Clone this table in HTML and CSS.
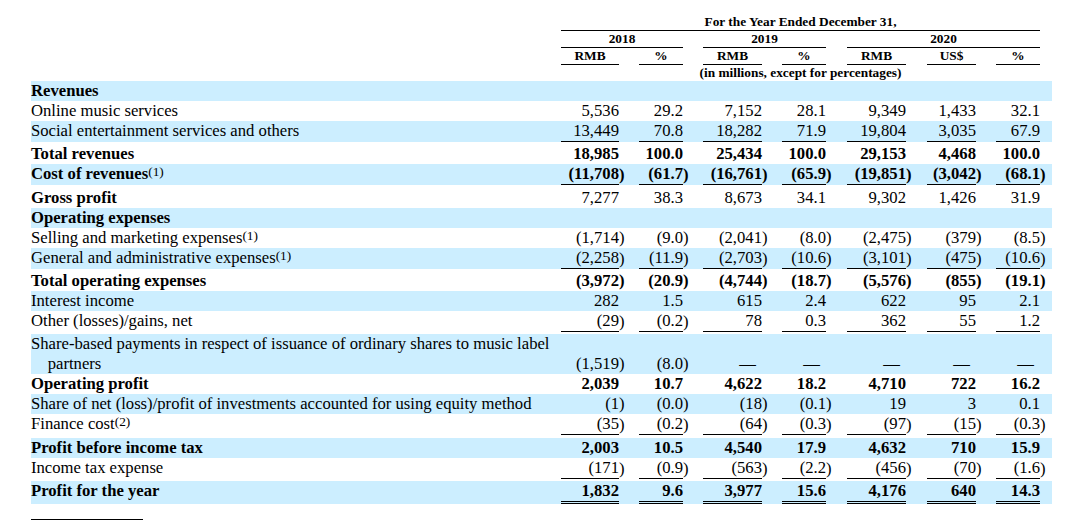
FILE: index.html
```html
<!DOCTYPE html>
<html lang="en">
<head>
<meta charset="utf-8">
<title>Consolidated Results of Operations</title>
<link rel="stylesheet" href="styles.css">
</head>
<body>
<div class="fin">
  <div class="row head">
    <div class="span-all ruled">For the Year Ended December 31,</div>
  </div>
  <div class="row head">
    <div class="y2018 ruled">2018</div>
    <div class="y2019 ruled">2019</div>
    <div class="y2020 ruled">2020</div>
  </div>
  <div class="row head">
    <div class="c1 ruled">RMB</div>
    <div class="c2 ruled">%</div>
    <div class="c3 ruled">RMB</div>
    <div class="c4 ruled">%</div>
    <div class="c5 ruled">RMB</div>
    <div class="c6 ruled">US$</div>
    <div class="c7 ruled">%</div>
  </div>
  <div class="row head">
    <div class="span-all">(in millions, except for percentages)</div>
  </div>

  <div class="row blue">
    <div class="lbl b">Revenues</div>
  </div>
  <div class="row">
    <div class="lbl">Online music services</div>
    <div class="n">5,536</div><div class="s"></div>
    <div class="n">29.2</div><div class="s"></div>
    <div class="n">7,152</div><div class="s"></div>
    <div class="n">28.1</div><div class="s"></div>
    <div class="n">9,349</div><div class="s"></div>
    <div class="n">1,433</div><div class="s"></div>
    <div class="n">32.1</div><div class="s"></div>
  </div>
  <div class="row blue u">
    <div class="lbl">Social entertainment services and others</div>
    <div class="n">13,449</div><div class="s"></div>
    <div class="n">70.8</div><div class="s"></div>
    <div class="n">18,282</div><div class="s"></div>
    <div class="n">71.9</div><div class="s"></div>
    <div class="n">19,804</div><div class="s"></div>
    <div class="n">3,035</div><div class="s"></div>
    <div class="n">67.9</div><div class="s"></div>
  </div>
  <div class="row b">
    <div class="lbl">Total revenues</div>
    <div class="n">18,985</div><div class="s"></div>
    <div class="n">100.0</div><div class="s"></div>
    <div class="n">25,434</div><div class="s"></div>
    <div class="n">100.0</div><div class="s"></div>
    <div class="n">29,153</div><div class="s"></div>
    <div class="n">4,468</div><div class="s"></div>
    <div class="n">100.0</div><div class="s"></div>
  </div>
  <div class="row blue u b">
    <div class="lbl">Cost of revenues<span class="fn">(1)</span></div>
    <div class="n">(11,708</div><div class="s">)</div>
    <div class="n">(61.7</div><div class="s">)</div>
    <div class="n">(16,761</div><div class="s">)</div>
    <div class="n">(65.9</div><div class="s">)</div>
    <div class="n">(19,851</div><div class="s">)</div>
    <div class="n">(3,042</div><div class="s">)</div>
    <div class="n">(68.1</div><div class="s">)</div>
  </div>
  <div class="row">
    <div class="lbl b">Gross profit</div>
    <div class="n">7,277</div><div class="s"></div>
    <div class="n">38.3</div><div class="s"></div>
    <div class="n">8,673</div><div class="s"></div>
    <div class="n">34.1</div><div class="s"></div>
    <div class="n">9,302</div><div class="s"></div>
    <div class="n">1,426</div><div class="s"></div>
    <div class="n">31.9</div><div class="s"></div>
  </div>
  <div class="row blue">
    <div class="lbl b">Operating expenses</div>
  </div>
  <div class="row">
    <div class="lbl">Selling and marketing expenses<span class="fn">(1)</span></div>
    <div class="n">(1,714</div><div class="s">)</div>
    <div class="n">(9.0</div><div class="s">)</div>
    <div class="n">(2,041</div><div class="s">)</div>
    <div class="n">(8.0</div><div class="s">)</div>
    <div class="n">(2,475</div><div class="s">)</div>
    <div class="n">(379</div><div class="s">)</div>
    <div class="n">(8.5</div><div class="s">)</div>
  </div>
  <div class="row blue u">
    <div class="lbl">General and administrative expenses<span class="fn">(1)</span></div>
    <div class="n">(2,258</div><div class="s">)</div>
    <div class="n">(11.9</div><div class="s">)</div>
    <div class="n">(2,703</div><div class="s">)</div>
    <div class="n">(10.6</div><div class="s">)</div>
    <div class="n">(3,101</div><div class="s">)</div>
    <div class="n">(475</div><div class="s">)</div>
    <div class="n">(10.6</div><div class="s">)</div>
  </div>
  <div class="row b">
    <div class="lbl">Total operating expenses</div>
    <div class="n">(3,972</div><div class="s">)</div>
    <div class="n">(20.9</div><div class="s">)</div>
    <div class="n">(4,744</div><div class="s">)</div>
    <div class="n">(18.7</div><div class="s">)</div>
    <div class="n">(5,576</div><div class="s">)</div>
    <div class="n">(855</div><div class="s">)</div>
    <div class="n">(19.1</div><div class="s">)</div>
  </div>
  <div class="row blue">
    <div class="lbl">Interest income</div>
    <div class="n">282</div><div class="s"></div>
    <div class="n">1.5</div><div class="s"></div>
    <div class="n">615</div><div class="s"></div>
    <div class="n">2.4</div><div class="s"></div>
    <div class="n">622</div><div class="s"></div>
    <div class="n">95</div><div class="s"></div>
    <div class="n">2.1</div><div class="s"></div>
  </div>
  <div class="row u">
    <div class="lbl">Other (losses)/gains, net</div>
    <div class="n">(29</div><div class="s">)</div>
    <div class="n">(0.2</div><div class="s">)</div>
    <div class="n">78</div><div class="s"></div>
    <div class="n">0.3</div><div class="s"></div>
    <div class="n">362</div><div class="s"></div>
    <div class="n">55</div><div class="s"></div>
    <div class="n">1.2</div><div class="s"></div>
  </div>
  <div class="row blue">
    <div class="lbl">Share-based payments in respect of issuance of ordinary shares to music label partners</div>
    <div class="n">(1,519</div><div class="s">)</div>
    <div class="n">(8.0</div><div class="s">)</div>
    <div class="n d">—</div><div class="s"></div>
    <div class="n d">—</div><div class="s"></div>
    <div class="n d">—</div><div class="s"></div>
    <div class="n d">—</div><div class="s"></div>
    <div class="n d">—</div><div class="s"></div>
  </div>
  <div class="row b">
    <div class="lbl">Operating profit</div>
    <div class="n">2,039</div><div class="s"></div>
    <div class="n">10.7</div><div class="s"></div>
    <div class="n">4,622</div><div class="s"></div>
    <div class="n">18.2</div><div class="s"></div>
    <div class="n">4,710</div><div class="s"></div>
    <div class="n">722</div><div class="s"></div>
    <div class="n">16.2</div><div class="s"></div>
  </div>
  <div class="row blue">
    <div class="lbl">Share of net (loss)/profit of investments accounted for using equity method</div>
    <div class="n">(1</div><div class="s">)</div>
    <div class="n">(0.0</div><div class="s">)</div>
    <div class="n">(18</div><div class="s">)</div>
    <div class="n">(0.1</div><div class="s">)</div>
    <div class="n">19</div><div class="s"></div>
    <div class="n">3</div><div class="s"></div>
    <div class="n">0.1</div><div class="s"></div>
  </div>
  <div class="row u">
    <div class="lbl">Finance cost<span class="fn">(2)</span></div>
    <div class="n">(35</div><div class="s">)</div>
    <div class="n">(0.2</div><div class="s">)</div>
    <div class="n">(64</div><div class="s">)</div>
    <div class="n">(0.3</div><div class="s">)</div>
    <div class="n">(97</div><div class="s">)</div>
    <div class="n">(15</div><div class="s">)</div>
    <div class="n">(0.3</div><div class="s">)</div>
  </div>
  <div class="row blue b">
    <div class="lbl">Profit before income tax</div>
    <div class="n">2,003</div><div class="s"></div>
    <div class="n">10.5</div><div class="s"></div>
    <div class="n">4,540</div><div class="s"></div>
    <div class="n">17.9</div><div class="s"></div>
    <div class="n">4,632</div><div class="s"></div>
    <div class="n">710</div><div class="s"></div>
    <div class="n">15.9</div><div class="s"></div>
  </div>
  <div class="row u">
    <div class="lbl">Income tax expense</div>
    <div class="n">(171</div><div class="s">)</div>
    <div class="n">(0.9</div><div class="s">)</div>
    <div class="n">(563</div><div class="s">)</div>
    <div class="n">(2.2</div><div class="s">)</div>
    <div class="n">(456</div><div class="s">)</div>
    <div class="n">(70</div><div class="s">)</div>
    <div class="n">(1.6</div><div class="s">)</div>
  </div>
  <div class="row blue b dbl">
    <div class="lbl">Profit for the year</div>
    <div class="n">1,832</div><div class="s"></div>
    <div class="n">9.6</div><div class="s"></div>
    <div class="n">3,977</div><div class="s"></div>
    <div class="n">15.6</div><div class="s"></div>
    <div class="n">4,176</div><div class="s"></div>
    <div class="n">640</div><div class="s"></div>
    <div class="n">14.3</div><div class="s"></div>
  </div>
  <div class="footrule"></div>
</div>
</body>
</html>
```

FILE: styles.css
```css
html, body {
  margin: 0;
  background: #ffffff;
}

body {
  padding: 14px 0 0 31px;
  font-family: "Liberation Serif", "Times New Roman", serif;
  color: #000000;
}

.fin {
  width: 1021px;
}

.row {
  display: grid;
  grid-template-columns: 530px 58px 20px 44px 20px 59px 20px 44px 21px 59px 21px 49px 20px 44px 12px;
  font-size: 16.67px;
  line-height: 20px;
}

.head {
  font-size: 13.33px;
  line-height: 16px;
  font-weight: bold;
  text-align: center;
}

.ruled {
  border-bottom: 1px solid #000000;
}

.span-all { grid-column: 2 / 15; }
.y2018 { grid-column: 2 / 5; }
.y2019 { grid-column: 6 / 9; }
.y2020 { grid-column: 10 / 15; }
.c1 { grid-column: 2; }
.c2 { grid-column: 4; }
.c3 { grid-column: 6; }
.c4 { grid-column: 8; }
.c5 { grid-column: 10; }
.c6 { grid-column: 12; }
.c7 { grid-column: 14; }

.blue {
  background: #cceeff;
}

.b {
  font-weight: bold;
}

.lbl {
  grid-column: 1;
  padding-left: 1em;
  text-indent: -1em;
}

.n {
  text-align: right;
  align-self: end;
  white-space: nowrap;
}

.s {
  align-self: end;
  white-space: nowrap;
}

.d {
  padding-right: 6px;
}

.u {
  margin-bottom: 2.33px;
}

.u .n {
  border-bottom: 1px solid #000000;
}

.dbl .n {
  border-bottom: 3px double #000000;
}

.fn {
  font-size: 13.33px;
  font-weight: normal;
  line-height: 1;
  vertical-align: 3px;
}

.footrule {
  width: 112px;
  margin-top: 15px;
  border-top: 1px solid #000000;
}
```
